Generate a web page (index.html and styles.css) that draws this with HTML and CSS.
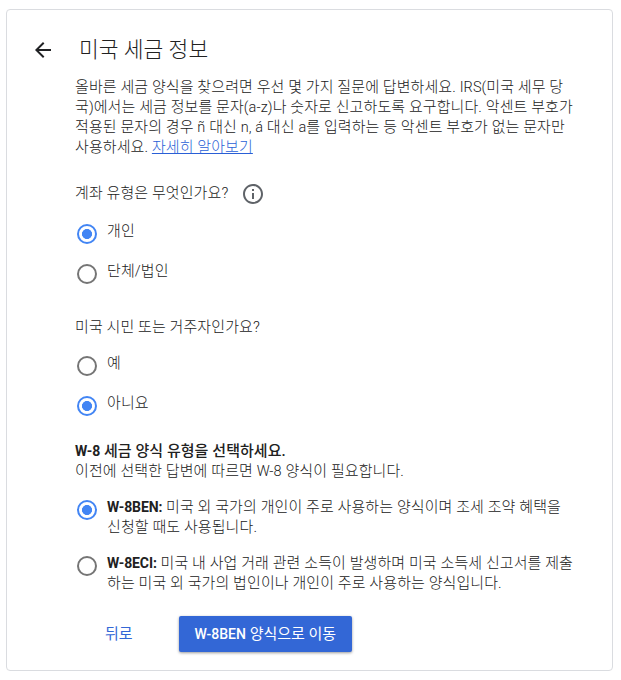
FILE: index.html
```html
<!DOCTYPE html>
<html lang="ko">
<head>
  <meta charset="UTF-8" />
  <meta name="viewport" content="width=device-width, initial-scale=1.0"/>
  <title>미국 세금 정보</title>
  <link rel="stylesheet" href="styles.css">
</head>
<body>
  <main class="card">
    <header>
      <svg class="back-icon" viewBox="0 0 24 24"><path d="M20 11H7.83l5.59-5.59L12 4l-8 8 8 8 1.41-1.41L7.83 13H20v-2z"/></svg>
      <h1>미국 세금 정보</h1>
    </header>

    <p class="intro">올바른 세금 양식을 찾으려면 우선 몇 가지 질문에 답변하세요. <span class="latin">IRS(</span>미국 세무 당<br>국<span class="latin">)</span>에서는 세금 정보를 문자<span class="latin">(a-z)</span>나 숫자로 신고하도록 요구합니다. 악센트 부호가<br>적용된 문자의 경우 <span class="latin">ñ</span> 대신 <span class="latin">n, á</span> 대신 <span class="latin">a</span>를 입력하는 등 악센트 부호가 없는 문자만<br>사용하세요. <a href="#">자세히 알아보기</a></p>

    <section class="account">
      <div class="question">
        <span>계좌 유형은 무엇인가요?</span>
        <svg class="info-icon" viewBox="0 0 24 24"><path d="M11 7h2v2h-2zm0 4h2v6h-2zm1-9C6.48 2 2 6.48 2 12s4.48 10 10 10 10-4.48 10-10S17.52 2 12 2zm0 18c-4.41 0-8-3.59-8-8s3.59-8 8-8 8 3.59 8 8-3.59 8-8 8z"/></svg>
      </div>
      <label class="option"><input type="radio" name="account" checked><span>개인</span></label>
      <label class="option"><input type="radio" name="account"><span>단체/법인</span></label>
    </section>

    <section class="citizen">
      <div class="question">미국 시민 또는 거주자인가요?</div>
      <label class="option"><input type="radio" name="citizen"><span>예</span></label>
      <label class="option"><input type="radio" name="citizen" checked><span>아니요</span></label>
    </section>

    <section class="form-type">
      <h2><span class="latin">W-8</span> 세금 양식 유형을 선택하세요.</h2>
      <p>이전에 선택한 답변에 따르면 <span class="latin">W-8</span> 양식이 필요합니다.</p>
      <label class="option long"><input type="radio" name="form" checked><span><b class="latin">W-8BEN:</b> 미국 외 국가의 개인이 주로 사용하는 양식이며 조세 조약 혜택을<br>신청할 때도 사용됩니다.</span></label>
      <label class="option long"><input type="radio" name="form"><span><b class="latin">W-8ECI:</b> 미국 내 사업 거래 관련 소득이 발생하며 미국 소득세 신고서를 제출<br>하는 미국 외 국가의 법인이나 개인이 주로 사용하는 양식입니다.</span></label>
    </section>

    <div class="actions">
      <button class="back">뒤로</button>
      <button class="next"><span class="latin">W-8BEN</span> 양식으로 이동</button>
    </div>
  </main>
</body>
</html>
```

FILE: styles.css
```css
* {
  box-sizing: border-box;
}

body {
  margin: 0;
  padding: 9px 8px 9px 6px;
  background-color: #fff;
  color: #212121;
  font-family: Roboto, 'Noto Sans CJK KR', sans-serif;
  font-size: 15px;
  font-weight: 300;
  letter-spacing: 0.09px;
  line-height: 20px;
  white-space: nowrap;
}

.latin {
  font-size: 14.5px;
  font-weight: 300;
  line-height: 1;
}

.card {
  height: 662px;
  padding: 27px 0 0 68px;
  border: 1px solid #dadce0;
  border-radius: 4px;
}

header {
  display: flex;
  align-items: center;
  height: 26px;
  margin-left: -44px;
}

.back-icon {
  width: 24px;
  height: 24px;
  fill: #202124;
}

h1 {
  margin: 0 0 0 24px;
  font-size: 21.5px;
  font-weight: 300;
  letter-spacing: 0;
  line-height: 26px;
}

p {
  margin: 0;
}

.intro {
  margin-top: 14px;
}

a {
  color: #2a5fd6;
  text-decoration: underline;
}

.question {
  display: flex;
  align-items: center;
  gap: 13px;
  height: 20px;
}

.info-icon {
  width: 24px;
  height: 24px;
  margin-top: 2px;
  fill: #5f6368;
}

.option {
  display: flex;
  align-items: flex-start;
  gap: 10px;
  height: 20px;
  margin-top: 20px;
}

.option input {
  appearance: none;
  flex: none;
  width: 20px;
  height: 20px;
  margin: 3px 0 0 2px;
  border: 2px solid #757575;
  border-radius: 50%;
}

.option input:checked {
  border-color: #4285f4;
  background: radial-gradient(circle, #4285f4 4.7px, transparent 5.3px);
}

.account {
  margin-top: 26px;
}

.account .option:nth-child(2) {
  margin-top: 18px;
}

.citizen {
  margin-top: 36px;
}

.citizen .option:nth-child(2) {
  margin-top: 16px;
}

.form-type {
  margin-top: 28px;
}

h2 {
  margin: 0;
  font-size: 15px;
  font-weight: 500;
  letter-spacing: 0.06px;
  line-height: 20px;
}

h2 .latin,
b.latin {
  font-size: 14px;
  font-weight: 700;
  letter-spacing: -0.1px;
}

.option.long {
  height: 40px;
  margin-top: 16px;
}

.actions {
  display: flex;
  gap: 30px;
  margin-top: 23px;
  padding-left: 14px;
}

button {
  height: 36px;
  padding: 0 16px 4px;
  border: none;
  border-radius: 2px;
  background: none;
  font-family: inherit;
  font-size: 15px;
  font-weight: 400;
}

.back {
  color: #3367d6;
}

.next {
  width: 173px;
  background-color: #3367d6;
  color: #fff;
  box-shadow: 0 1px 3px rgba(0, 0, 0, 0.4);
}

.next .latin {
  font-size: 14px;
  font-weight: 500;
}
```
